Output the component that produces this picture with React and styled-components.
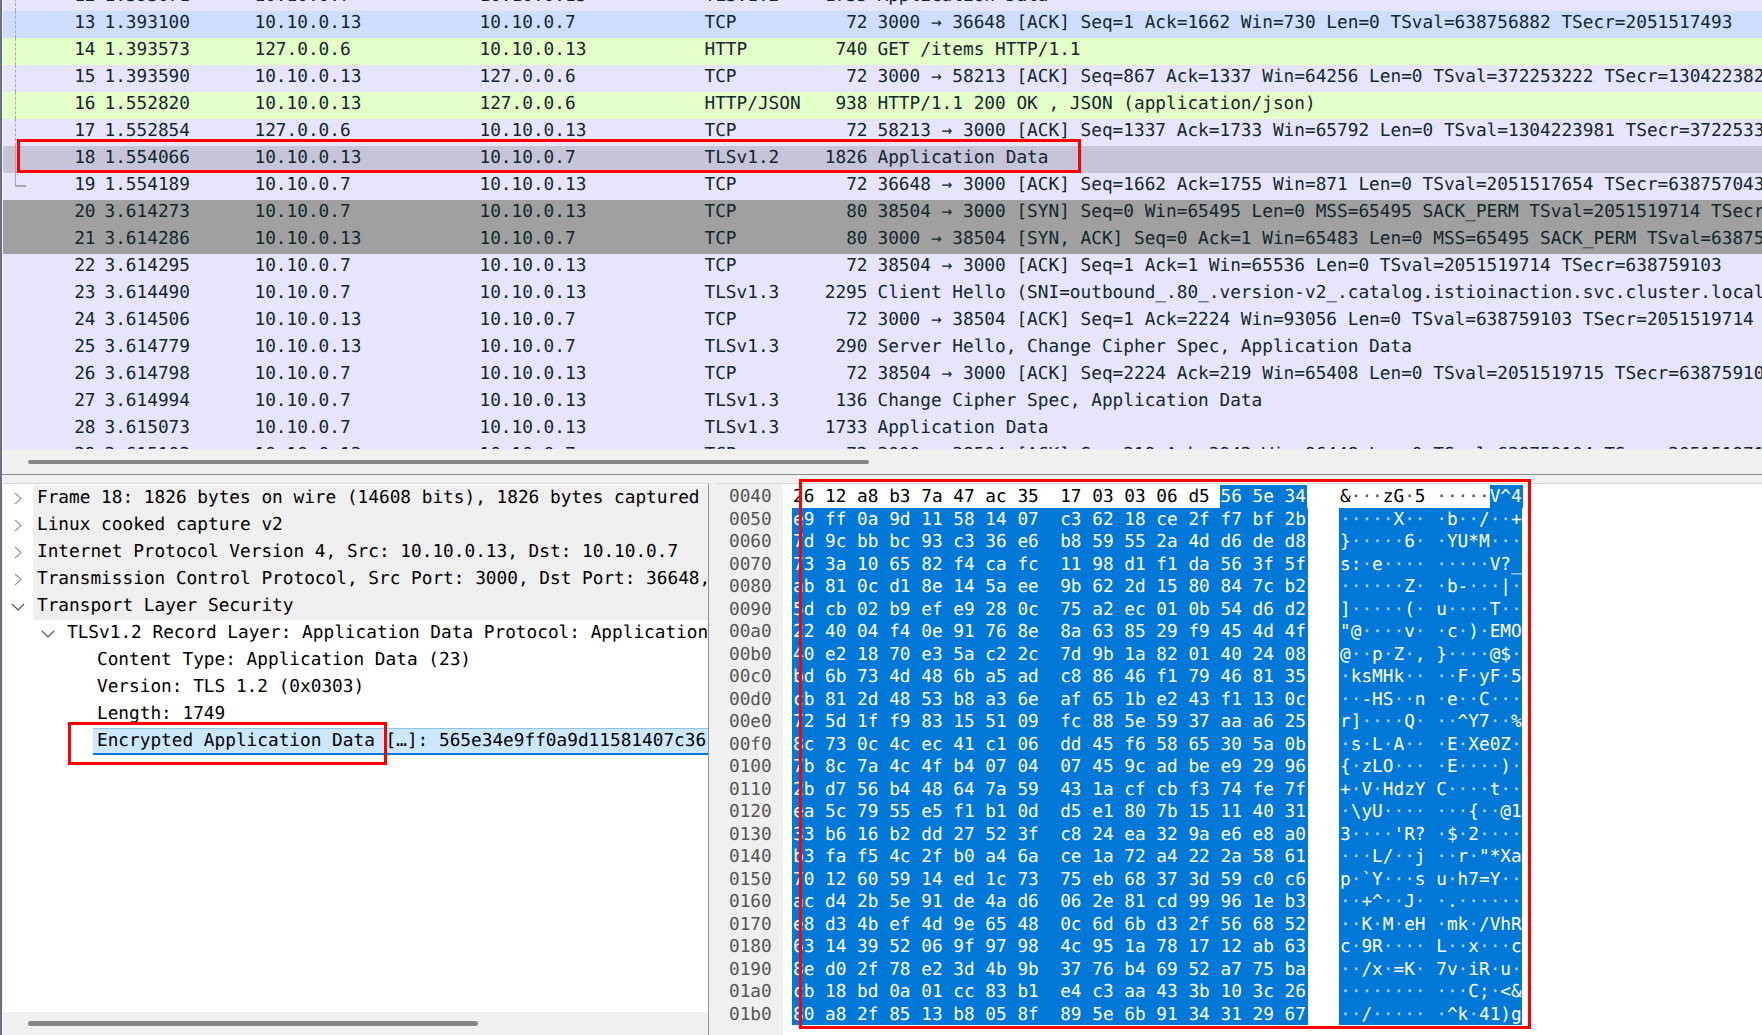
import React from "react";
import styled, { createGlobalStyle } from "styled-components";

/* Data */
const PACKETS = [
  { no: 12, time: "1.393071", src: "10.10.0.7", dst: "10.10.0.13", proto: "TLSv1.2", len: 1735, info: "Application Data", kind: "tcp" },
  { no: 13, time: "1.393100", src: "10.10.0.13", dst: "10.10.0.7", proto: "TCP", len: 72, info: "3000 → 36648 [ACK] Seq=1 Ack=1662 Win=730 Len=0 TSval=638756882 TSecr=2051517493", kind: "blue" },
  { no: 14, time: "1.393573", src: "127.0.0.6", dst: "10.10.0.13", proto: "HTTP", len: 740, info: "GET /items HTTP/1.1", kind: "http" },
  { no: 15, time: "1.393590", src: "10.10.0.13", dst: "127.0.0.6", proto: "TCP", len: 72, info: "3000 → 58213 [ACK] Seq=867 Ack=1337 Win=64256 Len=0 TSval=372253222 TSecr=1304223820", kind: "tcp" },
  { no: 16, time: "1.552820", src: "10.10.0.13", dst: "127.0.0.6", proto: "HTTP/JSON", len: 938, info: "HTTP/1.1 200 OK , JSON (application/json)", kind: "http" },
  { no: 17, time: "1.552854", src: "127.0.0.6", dst: "10.10.0.13", proto: "TCP", len: 72, info: "58213 → 3000 [ACK] Seq=1337 Ack=1733 Win=65792 Len=0 TSval=1304223981 TSecr=372253382", kind: "tcp" },
  { no: 18, time: "1.554066", src: "10.10.0.13", dst: "10.10.0.7", proto: "TLSv1.2", len: 1826, info: "Application Data", kind: "selected" },
  { no: 19, time: "1.554189", src: "10.10.0.7", dst: "10.10.0.13", proto: "TCP", len: 72, info: "36648 → 3000 [ACK] Seq=1662 Ack=1755 Win=871 Len=0 TSval=2051517654 TSecr=638757043", kind: "tcp" },
  { no: 20, time: "3.614273", src: "10.10.0.7", dst: "10.10.0.13", proto: "TCP", len: 80, info: "38504 → 3000 [SYN] Seq=0 Win=65495 Len=0 MSS=65495 SACK_PERM TSval=2051519714 TSecr=0", kind: "syn" },
  { no: 21, time: "3.614286", src: "10.10.0.13", dst: "10.10.0.7", proto: "TCP", len: 80, info: "3000 → 38504 [SYN, ACK] Seq=0 Ack=1 Win=65483 Len=0 MSS=65495 SACK_PERM TSval=638759103", kind: "syn" },
  { no: 22, time: "3.614295", src: "10.10.0.7", dst: "10.10.0.13", proto: "TCP", len: 72, info: "38504 → 3000 [ACK] Seq=1 Ack=1 Win=65536 Len=0 TSval=2051519714 TSecr=638759103", kind: "tcp" },
  { no: 23, time: "3.614490", src: "10.10.0.7", dst: "10.10.0.13", proto: "TLSv1.3", len: 2295, info: "Client Hello (SNI=outbound_.80_.version-v2_.catalog.istioinaction.svc.cluster.local)", kind: "tcp" },
  { no: 24, time: "3.614506", src: "10.10.0.13", dst: "10.10.0.7", proto: "TCP", len: 72, info: "3000 → 38504 [ACK] Seq=1 Ack=2224 Win=93056 Len=0 TSval=638759103 TSecr=2051519714", kind: "tcp" },
  { no: 25, time: "3.614779", src: "10.10.0.13", dst: "10.10.0.7", proto: "TLSv1.3", len: 290, info: "Server Hello, Change Cipher Spec, Application Data", kind: "tcp" },
  { no: 26, time: "3.614798", src: "10.10.0.7", dst: "10.10.0.13", proto: "TCP", len: 72, info: "38504 → 3000 [ACK] Seq=2224 Ack=219 Win=65408 Len=0 TSval=2051519715 TSecr=638759104", kind: "tcp" },
  { no: 27, time: "3.614994", src: "10.10.0.7", dst: "10.10.0.13", proto: "TLSv1.3", len: 136, info: "Change Cipher Spec, Application Data", kind: "tcp" },
  { no: 28, time: "3.615073", src: "10.10.0.7", dst: "10.10.0.13", proto: "TLSv1.3", len: 1733, info: "Application Data", kind: "tcp" },
  { no: 29, time: "3.615103", src: "10.10.0.13", dst: "10.10.0.7", proto: "TCP", len: 72, info: "3000 → 38504 [ACK] Seq=219 Ack=3942 Win=96448 Len=0 TSval=638759104 TSecr=2051519715", kind: "tcp" },
];

const DETAILS = [
  { level: 0, toggle: "closed", text: "Frame 18: 1826 bytes on wire (14608 bits), 1826 bytes captured", shade: true },
  { level: 0, toggle: "closed", text: "Linux cooked capture v2", shade: true },
  { level: 0, toggle: "closed", text: "Internet Protocol Version 4, Src: 10.10.0.13, Dst: 10.10.0.7", shade: true },
  { level: 0, toggle: "closed", text: "Transmission Control Protocol, Src Port: 3000, Dst Port: 36648,", shade: true },
  { level: 0, toggle: "open", text: "Transport Layer Security", shade: true },
  { level: 1, toggle: "open", text: "TLSv1.2 Record Layer: Application Data Protocol: Application" },
  { level: 2, text: "Content Type: Application Data (23)" },
  { level: 2, text: "Version: TLS 1.2 (0x0303)" },
  { level: 2, text: "Length: 1749" },
  { level: 2, text: "Encrypted Application Data […]: 565e34e9ff0a9d11581407c36", active: true },
];

const HEX_LINES = [
  "26 12 a8 b3 7a 47 ac 35 17 03 03 06 d5 56 5e 34",
  "e9 ff 0a 9d 11 58 14 07 c3 62 18 ce 2f f7 bf 2b",
  "7d 9c bb bc 93 c3 36 e6 b8 59 55 2a 4d d6 de d8",
  "73 3a 10 65 82 f4 ca fc 11 98 d1 f1 da 56 3f 5f",
  "ab 81 0c d1 8e 14 5a ee 9b 62 2d 15 80 84 7c b2",
  "5d cb 02 b9 ef e9 28 0c 75 a2 ec 01 0b 54 d6 d2",
  "22 40 04 f4 0e 91 76 8e 8a 63 85 29 f9 45 4d 4f",
  "40 e2 18 70 e3 5a c2 2c 7d 9b 1a 82 01 40 24 08",
  "bd 6b 73 4d 48 6b a5 ad c8 86 46 f1 79 46 81 35",
  "cb 81 2d 48 53 b8 a3 6e af 65 1b e2 43 f1 13 0c",
  "72 5d 1f f9 83 15 51 09 fc 88 5e 59 37 aa a6 25",
  "8c 73 0c 4c ec 41 c1 06 dd 45 f6 58 65 30 5a 0b",
  "7b 8c 7a 4c 4f b4 07 04 07 45 9c ad be e9 29 96",
  "2b d7 56 b4 48 64 7a 59 43 1a cf cb f3 74 fe 7f",
  "ea 5c 79 55 e5 f1 b1 0d d5 e1 80 7b 15 11 40 31",
  "33 b6 16 b2 dd 27 52 3f c8 24 ea 32 9a e6 e8 a0",
  "b3 fa f5 4c 2f b0 a4 6a ce 1a 72 a4 22 2a 58 61",
  "70 12 60 59 14 ed 1c 73 75 eb 68 37 3d 59 c0 c6",
  "ac d4 2b 5e 91 de 4a d6 06 2e 81 cd 99 96 1e b3",
  "e8 d3 4b ef 4d 9e 65 48 0c 6d 6b d3 2f 56 68 52",
  "63 14 39 52 06 9f 97 98 4c 95 1a 78 17 12 ab 63",
  "8e d0 2f 78 e2 3d 4b 9b 37 76 b4 69 52 a7 75 ba",
  "cb 18 bd 0a 01 cc 83 b1 e4 c3 aa 43 3b 10 3c 26",
  "80 a8 2f 85 13 b8 05 8f 89 5e 6b 91 34 31 29 67",
];

const toBytes = (line) => line.split(" ");
const offsetOf = (i) => (0x40 + i * 16).toString(16).padStart(4, "0");
const hexPart = (bytes) => bytes.slice(0, 8).join(" ") + "  " + bytes.slice(8).join(" ");
const charOf = (b) => {
  const code = parseInt(b, 16);
  return code >= 32 && code < 127 ? String.fromCharCode(code) : "·";
};

const RowColor = {
  tcp: "#e6e5fd",
  blue: "#cfdeff",
  http: "#e4ffc7",
  selected: "#c5c4d8",
  syn: "#a0a0a0",
};

const Ascii = ({ bytes }) => {
  const cell = (b, i) => {
    const c = charOf(b);
    return c === "·" ? <Dot key={i}>·</Dot> : <span key={i}>{c}</span>;
  };
  return (
    <>
      {bytes.slice(0, 8).map(cell)} {bytes.slice(8).map((b, i) => cell(b, i + 8))}
    </>
  );
};

const Chevron = ({ open }) =>
  open ? (
    <svg width="14" height="8" viewBox="0 0 14 8">
      <path d="M1 1l6 6 6-6" fill="none" stroke="#555" strokeWidth="1.2" />
    </svg>
  ) : (
    <svg width="8" height="13" viewBox="0 0 8 13">
      <path d="M1 1l6 5.5-6 5.5" fill="none" stroke="#999" strokeWidth="1.2" />
    </svg>
  );

const App = () => {
  return (
    <Screen>
      <GlobalStyle />
      <PacketList>
        <PacketScroll>
          {PACKETS.map((p) => (
            <PacketRow key={p.no} kind={p.kind}>
              {p.no <= 19 && <TreeLine $solid={p.no >= 18} $end={p.no === 19} />}
              <NoCell>{p.no}</NoCell>
              <TimeCell>{p.time}</TimeCell>
              <AddrCell>{p.src}</AddrCell>
              <AddrCell>{p.dst}</AddrCell>
              <ProtoCell>{p.proto}</ProtoCell>
              <LenCell>{p.len}</LenCell>
              <InfoCell>{p.info}</InfoCell>
            </PacketRow>
          ))}
        </PacketScroll>
      </PacketList>
      <ScrollTrack $height={25}>
        <ScrollThumb $width={841} $height={4} />
      </ScrollTrack>
      <Splitter />
      <BottomPanes>
        <DetailPane>
          <DetailList>
            {DETAILS.map((d) => (
              <DetailRow key={d.text}>
                <Toggle level={d.level}>{d.toggle && <Chevron open={d.toggle === "open"} />}</Toggle>
                <DetailText $shade={d.shade} $active={d.active}>
                  {d.text}
                </DetailText>
              </DetailRow>
            ))}
          </DetailList>
          <ScrollTrack $height={23}>
            <ScrollThumb $width={450} $height={5} />
          </ScrollTrack>
        </DetailPane>
        <HexPane>
          <OffsetColumn>
            {HEX_LINES.map((_, i) => (
              <Line key={i}>{offsetOf(i)}</Line>
            ))}
          </OffsetColumn>
          <HexColumn>
            {HEX_LINES.map((line, i) => {
              const bytes = toBytes(line);
              if (i === 0) {
                return (
                  <Line key={i}>
                    {bytes.slice(0, 8).join(" ")}
                    {"  "}
                    {bytes.slice(8, 13).join(" ")}{" "}
                    <Picked>{bytes.slice(13).join(" ")}</Picked>
                  </Line>
                );
              }
              return (
                <PickedLine key={i}>{hexPart(bytes)}</PickedLine>
              );
            })}
          </HexColumn>
          <AsciiColumn>
            {HEX_LINES.map((line, i) => {
              const bytes = toBytes(line);
              if (i === 0) {
                return (
                  <Line key={i}>
                    <Ascii bytes={bytes.slice(0, 13)} />
                    <Picked>
                      {bytes.slice(13).map(charOf).join("")}
                    </Picked>
                  </Line>
                );
              }
              return (
                <PickedLine key={i}>
                  <Ascii bytes={bytes} />
                </PickedLine>
              );
            })}
          </AsciiColumn>
        </HexPane>
      </BottomPanes>
      <PacketMark />
      <DetailMark />
      <HexMark />
    </Screen>
  );
};

const GlobalStyle = createGlobalStyle`
  html, body {
    margin: 0;
    padding: 0;
    background: #f0f0f0;
    overflow: hidden;
  }
  * {
    box-sizing: border-box;
  }
`;

const Screen = styled.div`
  position: relative;
  width: 1762px;
  height: 1035px;
  display: flex;
  flex-direction: column;
  border-left: 2px solid #6a7280;
  padding-left: 1px;
  background: #f0f0f0;
  color: #12272e;
  font-family: "DejaVu Sans Mono", "Liberation Mono", monospace;
  font-size: 17.75px;
  text-rendering: geometricPrecision;
  white-space: pre;
  overflow: hidden;
`;

const PacketList = styled.div`
  height: 449px;
  flex: none;
  overflow: hidden;
`;

const PacketScroll = styled.div`
  margin-top: -16px;
`;

const PacketRow = styled.div`
  position: relative;
  height: 27px;
  line-height: 24px;
  display: flex;
  background: ${(props) => RowColor[props.kind]};
  border-radius: ${(props) => (props.kind === "selected" ? "3px 0 0 3px" : "0")};
`;

/* related packet bracket beside the number column */
const TreeLine = styled.i`
  position: absolute;
  left: 12px;
  top: 0;
  width: ${(props) => (props.$end ? "11px" : "1px")};
  height: ${(props) => (props.$end ? "14px" : "27px")};
  border-left: 1px ${(props) => (props.$solid ? "solid" : "dashed")} #a8a8a8;
  border-bottom: ${(props) => (props.$end ? "2px solid #a8a8a8" : "0")};
`;

const NoCell = styled.span`
  width: 92.5px;
  flex: none;
  text-align: right;
`;

const TimeCell = styled.span`
  width: 150px;
  margin-left: 9px;
  flex: none;
`;

const AddrCell = styled.span`
  width: 225px;
  flex: none;
`;

const ProtoCell = styled.span`
  width: 110px;
  flex: none;
`;

const LenCell = styled.span`
  width: 53px;
  flex: none;
  text-align: right;
`;

const InfoCell = styled.span`
  margin-left: 10px;
  flex: none;
`;

const ScrollTrack = styled.div`
  height: ${(props) => props.$height}px;
  flex: none;
  padding-left: 25px;
  display: flex;
  align-items: center;
  background: #f0f0f0;
`;

const ScrollThumb = styled.div`
  width: ${(props) => props.$width}px;
  height: ${(props) => props.$height}px;
  border-radius: 3px;
  background: #858585;
`;

const Splitter = styled.div`
  height: 9px;
  flex: none;
  border-top: 1px solid #8a8a8a;
  margin-left: -1px;
`;

const BottomPanes = styled.div`
  flex: 1;
  min-height: 0;
  display: flex;
  gap: 8px;
`;

const DetailPane = styled.div`
  width: 706px;
  flex: none;
  display: flex;
  flex-direction: column;
  background: #fff;
  border-right: 1px solid #8d93a3;
  border-top: 1px solid #d8d8d8;
  color: #000;
`;

const DetailList = styled.div`
  flex: 1;
  min-height: 0;
  padding-top: 1px;
  overflow: hidden;
`;

const DetailRow = styled.div`
  height: 27px;
  display: flex;
`;

const Toggle = styled.div`
  width: ${(props) => 30 + props.level * 30}px;
  flex: none;
  padding-right: 15px;
  display: flex;
  align-items: center;
  justify-content: flex-end;
  & > svg {
    transform: translateX(50%);
  }
`;

const DetailText = styled.div`
  flex: 1;
  min-width: 0;
  padding-left: 4px;
  overflow: hidden;
  line-height: 27px;
  background: ${(props) => (props.$active ? "#cce8ff" : props.$shade ? "#efefef" : "transparent")};
  ${(props) =>
    props.$active &&
    `
    line-height: 25px;
    height: 27px;
    border-top: 1px solid #8cc4ee;
    border-bottom: 2px solid #0078d7;
  `}
`;

const HexPane = styled.div`
  flex: 1;
  min-width: 0;
  display: flex;
  background: #fff;
  color: #000;
  border-top: 1px solid #d8d8d8;
`;

const OffsetColumn = styled.div`
  width: 66px;
  flex: none;
  padding: 1px 0 0 11px;
  background: #efefef;
  color: #555;
`;

const HexColumn = styled.div`
  width: 516px;
  flex: none;
  margin-left: 9px;
  padding-top: 1px;
`;

const AsciiColumn = styled.div`
  width: 183px;
  flex: none;
  margin-left: 31px;
  padding-top: 1px;
`;

const Line = styled.div`
  height: 22.5px;
  line-height: 24.5px;
  padding-left: 1px;
`;

const PickedLine = styled(Line)`
  background: #0078d7;
  color: #fff;
`;

const Picked = styled.span`
  display: inline-block;
  height: 22.5px;
  padding-right: 1px;
  background: #0078d7;
  color: #fff;
`;

const Dot = styled.span`
  opacity: 0.7;
`;

const RedBox = styled.div`
  position: absolute;
  border: 3px solid #f00;
  pointer-events: none;
`;

const PacketMark = styled(RedBox)`
  left: 15px;
  top: 139px;
  width: 1064px;
  height: 34px;
`;

const DetailMark = styled(RedBox)`
  left: 66px;
  top: 722px;
  width: 319px;
  height: 43px;
`;

const HexMark = styled(RedBox)`
  left: 797px;
  top: 479px;
  width: 732px;
  height: 550px;
`;

export default App;
